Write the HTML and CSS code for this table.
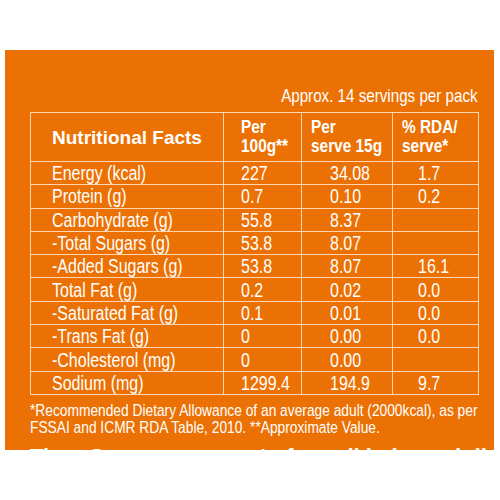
FILE: index.html
```html
<!DOCTYPE html>
<html>
<head>
<meta charset="utf-8">
<link rel="stylesheet" href="styles.css">
</head>
<body>
<div class="panel">
  <div class="servings"><span class="n">Approx. 14 servings per pack</span></div>
  <table class="facts">
    <colgroup>
      <col class="c1"><col class="c2"><col class="c3"><col class="c4">
    </colgroup>
    <thead>
      <tr>
        <th class="title">Nutritional Facts</th>
        <th class="h2"><span class="n">Per<br>100g**</span></th>
        <th class="h3"><span class="n">Per<br>serve 15g</span></th>
        <th class="h4"><span class="n">% RDA/<br>serve*</span></th>
      </tr>
    </thead>
    <tbody>
      <tr><td><span class="n">Energy (kcal)</span></td><td class="v2"><span class="n">227</span></td><td class="v3"><span class="n">34.08</span></td><td class="v4"><span class="n">1.7</span></td></tr>
      <tr><td><span class="n">Protein (g)</span></td><td class="v2"><span class="n">0.7</span></td><td class="v3"><span class="n">0.10</span></td><td class="v4"><span class="n">0.2</span></td></tr>
      <tr><td><span class="n">Carbohydrate (g)</span></td><td class="v2"><span class="n">55.8</span></td><td class="v3"><span class="n">8.37</span></td><td class="v4"></td></tr>
      <tr><td><span class="n">-Total Sugars (g)</span></td><td class="v2"><span class="n">53.8</span></td><td class="v3"><span class="n">8.07</span></td><td class="v4"></td></tr>
      <tr><td><span class="n">-Added Sugars (g)</span></td><td class="v2"><span class="n">53.8</span></td><td class="v3"><span class="n">8.07</span></td><td class="v4"><span class="n">16.1</span></td></tr>
      <tr><td><span class="n">Total Fat (g)</span></td><td class="v2"><span class="n">0.2</span></td><td class="v3"><span class="n">0.02</span></td><td class="v4"><span class="n">0.0</span></td></tr>
      <tr><td><span class="n">-Saturated Fat (g)</span></td><td class="v2"><span class="n">0.1</span></td><td class="v3"><span class="n">0.01</span></td><td class="v4"><span class="n">0.0</span></td></tr>
      <tr><td><span class="n">-Trans Fat (g)</span></td><td class="v2"><span class="n">0</span></td><td class="v3"><span class="n">0.00</span></td><td class="v4"><span class="n">0.0</span></td></tr>
      <tr><td><span class="n">-Cholesterol (mg)</span></td><td class="v2"><span class="n">0</span></td><td class="v3"><span class="n">0.00</span></td><td class="v4"></td></tr>
      <tr><td><span class="n">Sodium (mg)</span></td><td class="v2"><span class="n">1299.4</span></td><td class="v3"><span class="n">194.9</span></td><td class="v4"><span class="n">9.7</span></td></tr>
    </tbody>
  </table>
  <p class="note"><span class="n">*Recommended Dietary Allowance of an average adult (2000kcal), as per<br>FSSAI and ICMR RDA Table, 2010. **Approximate Value.</span></p>
  <p class="cut">Tips: Consume as part of a well balanced diet</p>
</div>
</body>
</html>
```
FILE: styles.css
```css
html, body {
  margin: 0;
  padding: 0;
  background: #ffffff;
}

body {
  width: 500px;
  height: 500px;
  overflow: hidden;
}

.panel {
  box-sizing: border-box;
  margin: 50px 6px 0 5px;
  height: 400px;
  background: #ec7104;
  padding: 0 16px 0 25px;
  overflow: hidden;
  color: #ffffff;
  font-family: "Liberation Sans", Arial, sans-serif;
}

.n {
  display: inline-block;
  white-space: nowrap;
  transform: scaleX(0.82);
  transform-origin: 0 50%;
}

.servings {
  padding-top: 37px;
  height: 25px;
  font-size: 18.5px;
  line-height: 18px;
  text-align: right;
  white-space: nowrap;
}

.servings .n {
  transform-origin: 100% 50%;
}

.facts {
  width: 448px;
  border-collapse: collapse;
  table-layout: fixed;
}

.c1 { width: 193px; }
.c2 { width: 78px; }
.c3 { width: 91px; }
.c4 { width: 86px; }

.facts th,
.facts td {
  border: 1px solid rgba(255, 232, 208, 0.85);
  padding: 0;
  text-align: left;
  vertical-align: middle;
  white-space: nowrap;
  overflow: visible;
}

.facts th {
  height: 48px;
  font-weight: bold;
  font-size: 17.5px;
  line-height: 19px;
}

.facts th .n {
  transform: scaleX(0.88);
}

.facts th.title {
  font-size: 19px;
  padding-left: 21px;
}

.facts th.h2 { padding-left: 17px; }
.facts th.h3 { padding-left: 9px; }
.facts th.h4 { padding-left: 9px; }

.facts td {
  height: 22.3px;
  font-size: 19.5px;
  line-height: 20px;
  padding-left: 21px;
}

.facts td.v2 { padding-left: 17px; }
.facts td.v3 { padding-left: 28px; }
.facts td.v4 { padding-left: 25px; }

.note {
  margin: 7px 0 0 0;
  font-size: 16.8px;
  line-height: 17.5px;
}

.cut {
  margin: 9.5px 0 0 0;
  font-weight: bold;
  font-size: 22px;
  line-height: 22px;
  white-space: nowrap;
}
```
